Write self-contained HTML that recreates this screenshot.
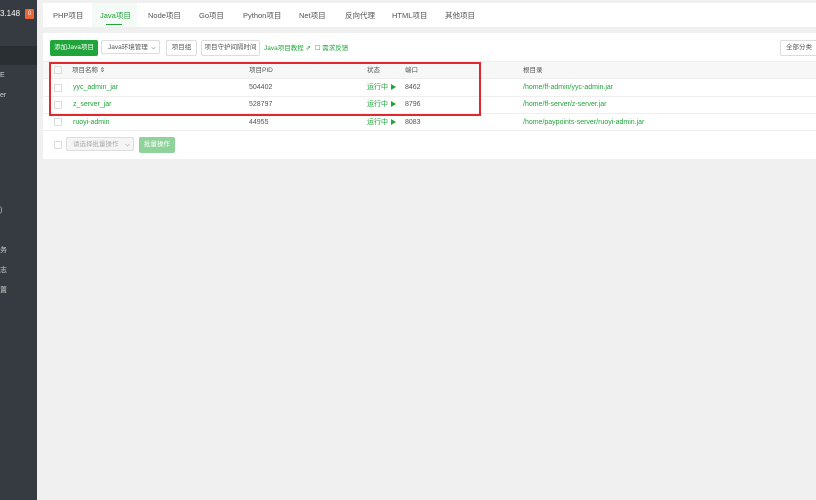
<!DOCTYPE html><html><head><meta charset="utf-8"><style>
body{margin:0;width:816px;height:500px;background:#f0f0f0;font-family:"Liberation Sans","Noto Sans CJK SC",sans-serif;font-size:7px;color:#555;position:relative;overflow:hidden}
.a{position:absolute;white-space:nowrap;line-height:9px}
.sb{left:0;top:0;width:37px;height:500px;background:#353b41}
.g{color:#20a53a}
.btn{position:absolute;border:1px solid #ddd;background:#fff;height:14px;line-height:14px;text-align:center;font-size:6.5px;color:#555;border-radius:2px}
.hl{position:absolute;left:43px;width:773px;height:1px;background:#eee}
.tri{display:inline-block;width:0;height:0;border-left:5px solid #20a53a;border-top:3px solid transparent;border-bottom:3px solid transparent;margin-left:3px;vertical-align:-1px}
.chev{position:absolute;top:5px}
</style></head><body>
<div class="a sb"></div>
<div class="a" style="left:0;top:9px;color:#fff;font-size:8px">3.148</div>
<div class="a" style="left:25px;top:9px;width:9px;height:10px;background:#e8663a;border-radius:1px;color:#fff;font-size:6px;text-align:center;line-height:10px">0</div>
<div class="a" style="left:0;top:46px;width:37px;height:19px;background:#2a2f34"></div>
<div class="a" style="left:0;top:71px;color:#ccc">E</div>
<div class="a" style="left:0;top:91px;color:#ccc">er</div>
<div class="a" style="left:0;top:206px;color:#ccc">)</div>
<div class="a" style="left:0;top:246px;color:#ccc">务</div>
<div class="a" style="left:0;top:266px;color:#ccc">志</div>
<div class="a" style="left:0;top:286px;color:#ccc">置</div>
<div class="a" style="left:43px;top:3px;width:773px;height:24px;background:#fff"></div>
<div class="a" style="left:92px;top:3px;width:45px;height:24px;background:#f4faf5"></div>
<div class="a" style="left:106px;top:24px;width:16px;height:1px;background:#20a53a"></div>
<div class="a" style="top:11px;left:53px;font-size:7.5px">PHP项目</div>
<div class="a g" style="top:11px;left:100px;font-size:7.5px">Java项目</div>
<div class="a" style="top:11px;left:148px;font-size:7.5px">Node项目</div>
<div class="a" style="top:11px;left:199px;font-size:7.5px">Go项目</div>
<div class="a" style="top:11px;left:243px;font-size:7.5px">Python项目</div>
<div class="a" style="top:11px;left:299px;font-size:7.5px">Net项目</div>
<div class="a" style="top:11px;left:345px;font-size:7.5px">反向代理</div>
<div class="a" style="top:11px;left:392px;font-size:7.5px">HTML项目</div>
<div class="a" style="top:11px;left:445px;font-size:7.5px">其他项目</div>
<div class="a" style="left:43px;top:33px;width:773px;height:126px;background:#fff"></div>
<div class="btn" style="left:50px;top:40px;width:46px;background:#20a53a;border-color:#20a53a;color:#fff">添加Java项目</div>
<div class="btn" style="left:101px;top:40px;width:59px;text-align:left;padding-left:6px;box-sizing:border-box">Java环境管理<svg class="chev" style="left:49px" width="5" height="4" viewBox="0 0 5 4"><path d="M0.5 1L2.5 3L4.5 1" stroke="#aaa" fill="none" stroke-width="0.7"/></svg></div>
<div class="btn" style="left:166px;top:40px;width:29px">项目组</div>
<div class="btn" style="left:201px;top:40px;width:57px">项目守护间隔时间</div>
<div class="a g" style="left:264px;top:44px;font-size:6.5px">Java项目教程 ⇗ &nbsp;☐ 需求反馈</div>
<div class="btn" style="left:780px;top:40px;width:36px">全部分类</div>
<div class="a" style="left:43px;top:61px;width:773px;height:17px;background:#f7f7f7"></div>
<div class="hl" style="top:61px"></div><div class="hl" style="top:78px"></div><div class="hl" style="top:96px"></div><div class="hl" style="top:113px"></div><div class="hl" style="top:130px"></div>
<div class="a" style="left:54px;top:66px;width:6px;height:6px;border:1px solid #ddd"></div>
<div class="a" style="left:54px;top:84px;width:6px;height:6px;border:1px solid #ddd"></div>
<div class="a" style="left:54px;top:101px;width:6px;height:6px;border:1px solid #ddd"></div>
<div class="a" style="left:54px;top:118px;width:6px;height:6px;border:1px solid #ddd"></div>
<div class="a" style="left:72px;top:66px;font-size:6.5px">项目名称 ⇕</div>
<div class="a" style="left:249px;top:66px;font-size:6.5px">项目PID</div>
<div class="a" style="left:367px;top:66px;font-size:6.5px">状态</div>
<div class="a" style="left:405px;top:66px;font-size:6.5px">端口</div>
<div class="a" style="left:523px;top:66px;font-size:6.5px">根目录</div>
<div class="a g" style="left:73px;top:83px">yyc_admin_jar</div><div class="a" style="left:249px;top:83px">504402</div><div class="a g" style="left:367px;top:83px">运行中<span class="tri"></span></div><div class="a" style="left:405px;top:83px">8462</div><div class="a g" style="left:523px;top:83px">/home/ff-admin/yyc-admin.jar</div>
<div class="a g" style="left:73px;top:100px">z_server_jar</div><div class="a" style="left:249px;top:100px">528797</div><div class="a g" style="left:367px;top:100px">运行中<span class="tri"></span></div><div class="a" style="left:405px;top:100px">8796</div><div class="a g" style="left:523px;top:100px">/home/ff-server/z-server.jar</div>
<div class="a g" style="left:73px;top:118px">ruoyi-admin</div><div class="a" style="left:249px;top:118px">44955</div><div class="a g" style="left:367px;top:118px">运行中<span class="tri"></span></div><div class="a" style="left:405px;top:118px">8083</div><div class="a g" style="left:523px;top:118px">/home/paypoints-server/ruoyi-admin.jar</div>
<div class="a" style="left:54px;top:141px;width:6px;height:6px;border:1px solid #ddd"></div>
<div class="btn" style="left:66px;top:137px;width:68px;background:#f5f5f5;color:#aaa;text-align:left;padding-left:6px;box-sizing:border-box">请选择批量操作<svg class="chev" style="left:58px" width="5" height="4" viewBox="0 0 5 4"><path d="M0.5 1L2.5 3L4.5 1" stroke="#bbb" fill="none" stroke-width="0.7"/></svg></div>
<div class="btn" style="left:139px;top:137px;width:34px;background:#8fd29c;border-color:#8fd29c;color:#fff">批量操作</div>
<div class="a" style="left:49px;top:62px;width:428px;height:50px;border:2px solid #e0282e"></div>
</body></html>
